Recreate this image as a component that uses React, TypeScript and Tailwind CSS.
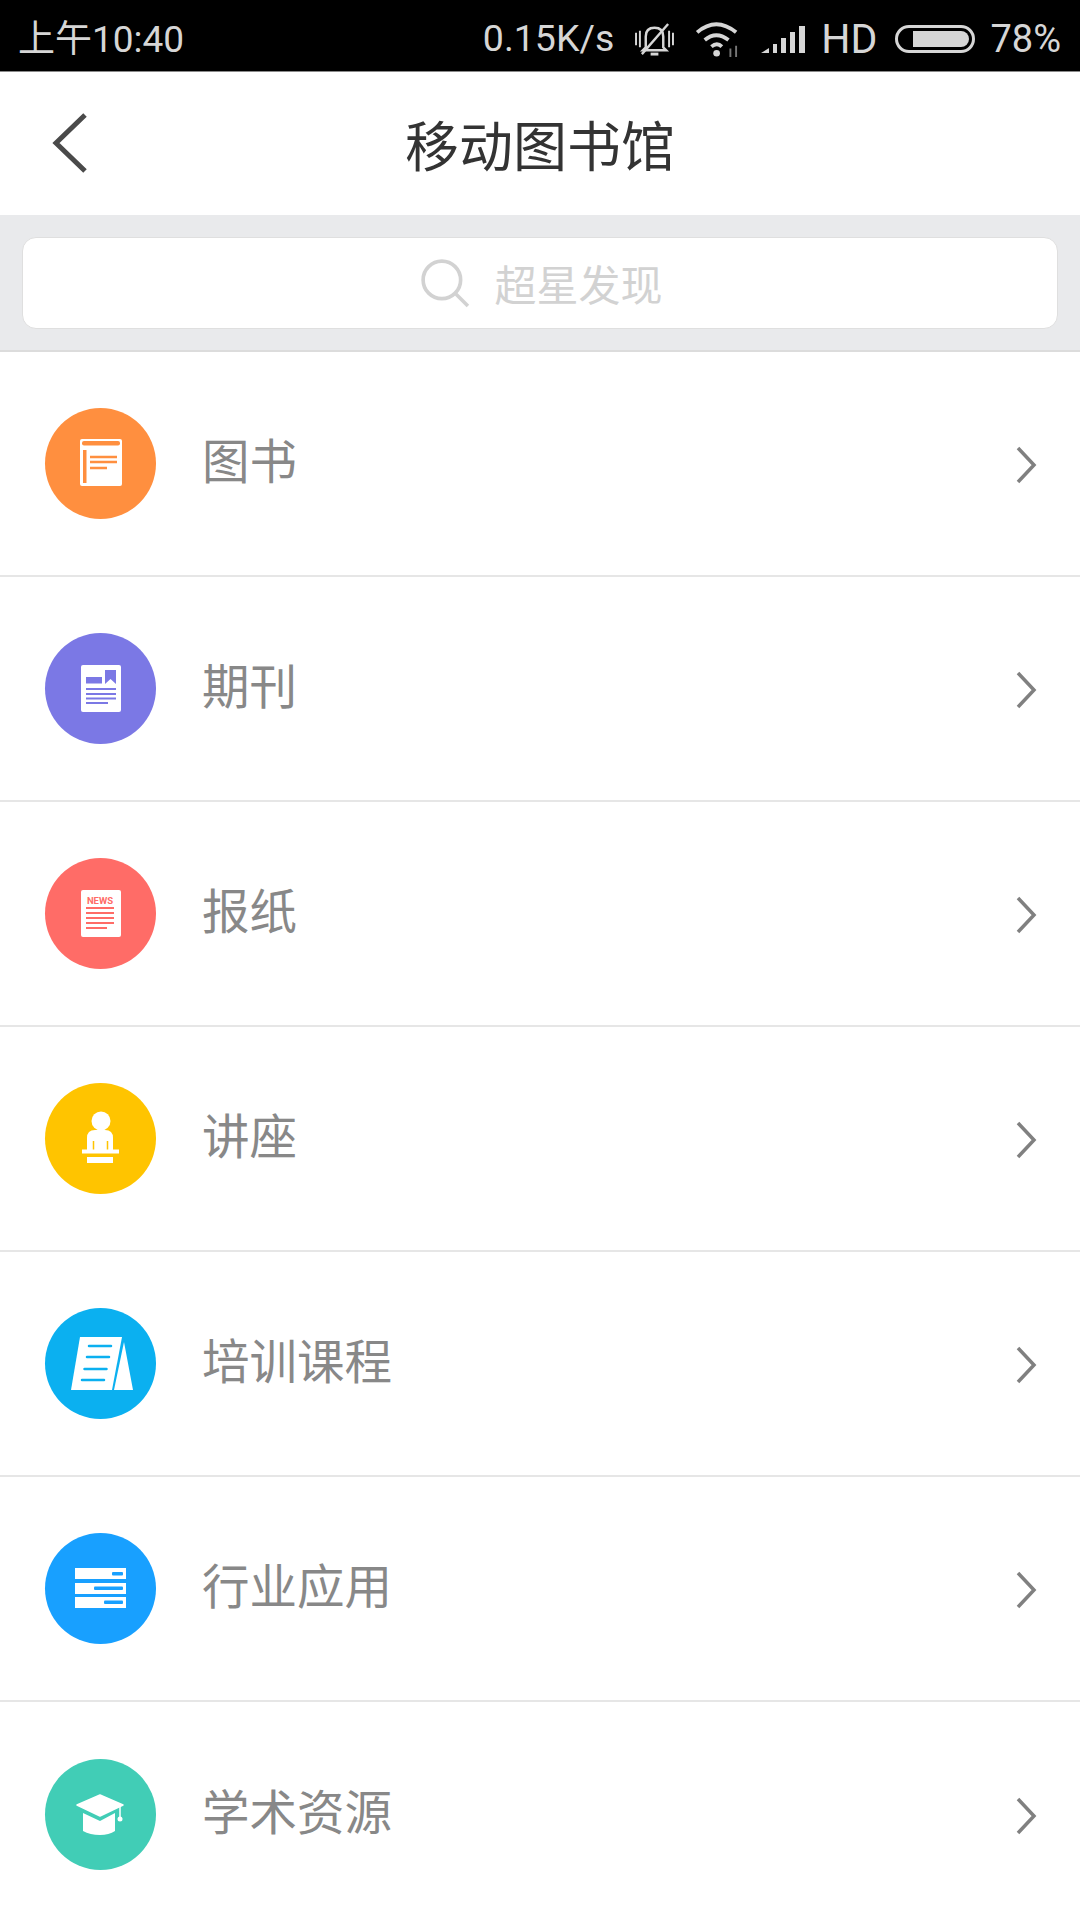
const cjk = '"Noto Sans CJK SC", sans-serif';

function BookIcon() {
  return (
    <svg viewBox="0 0 111 111" className="w-full h-full">
      <rect x="35" y="31" width="42" height="47" rx="2" fill="#fff" />
      <rect x="37" y="33" width="38" height="4.5" rx="2" fill="#ff8f3f" />
      <rect x="38" y="42" width="3.5" height="33" fill="#ff8f3f" />
      <path d="M45 49h27M45 54h27M45 60h17" stroke="#ff8f3f" strokeWidth="2.5" />
    </svg>
  );
}

function JournalIcon() {
  return (
    <svg viewBox="0 0 111 111" className="w-full h-full">
      <rect x="36" y="32" width="40" height="47" rx="2" fill="#fff" />
      <rect x="41" y="44" width="16" height="6.5" fill="#7b78e5" />
      <path d="M60 37h11v14l-5.5-5-5.5 5z" fill="#7b78e5" />
      <path d="M41 56h30M41 61h30M41 65.5h30M41 70h22" stroke="#7b78e5" strokeWidth="2.2" />
    </svg>
  );
}

function NewsIcon() {
  return (
    <svg viewBox="0 0 111 111" className="w-full h-full">
      <rect x="36" y="32" width="40" height="47" rx="2" fill="#fff" />
      <text x="55" y="46" textAnchor="middle" fontSize="9.5" fontWeight="700" fill="#ff6c67" fontFamily="Roboto, sans-serif">
        NEWS
      </text>
      <path d="M41 50h28M41 55h28M41 60h28M41 65h28M41 70h21" stroke="#ff6c67" strokeWidth="2.2" />
    </svg>
  );
}

function LectureIcon() {
  return (
    <svg viewBox="0 0 111 111" className="w-full h-full">
      <circle cx="56" cy="38" r="9.5" fill="#fff" />
      <path d="M42 67V55q0-8 8-8h10q8 0 8 8v12z" fill="#fff" />
      <path d="M48.5 58v9M62.5 58v9" stroke="#ffc400" strokeWidth="1.5" />
      <rect x="37" y="66.5" width="37" height="4" fill="#fff" />
      <rect x="42" y="74" width="26" height="6" fill="#fff" />
    </svg>
  );
}

function TrainingIcon() {
  return (
    <svg viewBox="0 0 111 111" className="w-full h-full">
      <path d="M35 29h42L67 82H26z" fill="#fff" />
      <path d="M79 34l9 48H69z" fill="#fff" />
      <path d="M44 38h22M42 49h22M39.5 61h22M37 72h22" stroke="#0bb0f0" strokeWidth="2.5" strokeLinecap="round" />
    </svg>
  );
}

function IndustryIcon() {
  return (
    <svg viewBox="0 0 111 111" className="w-full h-full">
      <rect x="30" y="35" width="51" height="11" fill="#fff" />
      <rect x="30" y="50" width="51" height="11" fill="#fff" />
      <rect x="30" y="64" width="51" height="11" fill="#fff" />
      <rect x="67" y="39" width="11" height="3.5" rx="1" fill="#18a0ff" />
      <rect x="49" y="53.5" width="29" height="3.5" rx="1" fill="#18a0ff" />
      <rect x="59" y="67.5" width="19" height="3.5" rx="1" fill="#18a0ff" />
    </svg>
  );
}

function CapIcon() {
  return (
    <svg viewBox="0 0 111 111" className="w-full h-full">
      <path d="M55 36l23 10-23 11-23-11z" fill="#fff" stroke="#fff" strokeWidth="1.5" strokeLinejoin="round" />
      <path d="M38 54l17 8 15-8v18q-6 4-15 4-10 0-17-4z" fill="#fff" />
      <path d="M75 47v11" stroke="#fff" strokeWidth="1.5" />
      <circle cx="75" cy="60" r="2.5" fill="#fff" />
    </svg>
  );
}

const rows = [
  { label: '图书', color: 'bg-[#ff8f3f]', icon: <BookIcon /> },
  { label: '期刊', color: 'bg-[#7b78e5]', icon: <JournalIcon /> },
  { label: '报纸', color: 'bg-[#ff6c67]', icon: <NewsIcon /> },
  { label: '讲座', color: 'bg-[#ffc400]', icon: <LectureIcon /> },
  { label: '培训课程', color: 'bg-[#0bb0f0]', icon: <TrainingIcon /> },
  { label: '行业应用', color: 'bg-[#18a0ff]', icon: <IndustryIcon /> },
  { label: '学术资源', color: 'bg-[#41cdb6]', icon: <CapIcon /> },
];

function StatusBar() {
  return (
    <div className="h-[72px] shrink-0 pt-[7px] bg-black border-b border-[#8a8a8a] flex items-center text-[#d6d6d6] text-[38px] leading-none font-['Roboto','Noto_Sans_CJK_SC',sans-serif]">
      <span className="ml-[18px] text-[37px]">上午10:40</span>
      <span className="ml-auto text-[37.5px]">0.15K/s</span>
      {/* muted bell */}
      <svg viewBox="0 0 44 36" className="w-[43px] h-[35px] ml-[19px]" fill="none" stroke="#d6d6d6" strokeWidth="2.5">
        <path d="M13 26V15q0-9 9-9t9 9v11l3 3H10z" />
        <path d="M18 33h8" strokeWidth="3" />
        <path d="M9 33L36 2" />
        <path d="M3 11v13M7 9v17M37 9v17M41 11v13" strokeWidth="2" />
      </svg>
      {/* wifi */}
      <svg viewBox="0 0 50 40" className="w-[48px] h-[38px] ml-[19px]" fill="none" stroke="#d6d6d6" strokeWidth="4">
        <path d="M2 13q20-17 41 0" />
        <path d="M10 21q12-10 25 0" />
        <path d="M17 28q6-5 11 0" />
        <circle cx="22.5" cy="35" r="3.5" fill="#d6d6d6" stroke="none" />
        <path d="M37 30v9M43 27v12" strokeWidth="2" stroke="#777" />
      </svg>
      {/* signal */}
      <svg viewBox="0 0 45 27" className="w-[45px] h-[27px] ml-[18px]" fill="#d6d6d6">
        <path d="M0 27l8-5v5z" />
        <rect x="12" y="18" width="4" height="9" />
        <rect x="20" y="12" width="5" height="15" />
        <rect x="29" y="6" width="5" height="21" />
        <rect x="38" y="0" width="6" height="27" />
      </svg>
      <span className="ml-[15px] text-[41px]">HD</span>
      {/* battery */}
      <div className="ml-[18px] w-[80px] h-[28px] rounded-full border-[3px] border-[#d6d6d6] flex items-center justify-end pr-[3px]">
        <div className="w-[56px] h-[16px] bg-[#d6d6d6] rounded-r-full" />
      </div>
      <span className="ml-[15px] mr-[19px]">78%</span>
    </div>
  );
}

export default function App() {
  return (
    <div className="w-[1080px] h-[1920px] bg-white overflow-hidden flex flex-col" style={{ fontFamily: cjk }}>
      <StatusBar />

      {/* Header */}
      <div className="relative h-[143px] shrink-0 flex items-center justify-center">
        <svg viewBox="0 0 36 60" className="absolute left-[52px] top-[41px] w-[36px] h-[60px]" fill="none" stroke="#4a4a4a" strokeWidth="5">
          <path d="M33 2L4 30l29 28" />
        </svg>
        <h1 className="text-[54px] leading-none text-[#333333] font-normal">移动图书馆</h1>
      </div>

      {/* Search */}
      <div className="h-[137px] shrink-0 bg-[#e9eaec] border-b-2 border-[#dcdcdc] px-[22px] flex items-center">
        <div className="w-full h-[92px] pl-[3px] bg-white rounded-[14px] border border-[#dfdfdf] flex items-center justify-center gap-[24px]">
          <svg viewBox="0 0 48 48" className="w-[50px] h-[50px]" fill="none" stroke="#d2d2d2" strokeWidth="3.5">
            <circle cx="21" cy="21" r="18" />
            <path d="M34 34l12 12" />
          </svg>
          <span className="text-[42px] leading-none text-[#d2d2d2]">超星发现</span>
        </div>
      </div>

      {/* List */}
      <div className="flex flex-col">
        {rows.map((row, i) => (
          <div key={row.label} className={`h-[225px] shrink-0 flex items-center pl-[45px] pr-[43px] ${i < rows.length - 1 ? 'border-b-2 border-[#e6e6e6]' : ''}`}>
            <div className={`w-[111px] h-[111px] rounded-full ${row.color}`}>{row.icon}</div>
            <span className="ml-[46px] -mt-[9px] text-[47.5px] leading-none text-[#888888]">{row.label}</span>
            <svg viewBox="0 0 22 40" className="ml-auto mt-[3px] w-[22px] h-[40px]" fill="none" stroke="#808080" strokeWidth="3.5">
              <path d="M3 3l16 17L3 37" />
            </svg>
          </div>
        ))}
      </div>
    </div>
  );
}
